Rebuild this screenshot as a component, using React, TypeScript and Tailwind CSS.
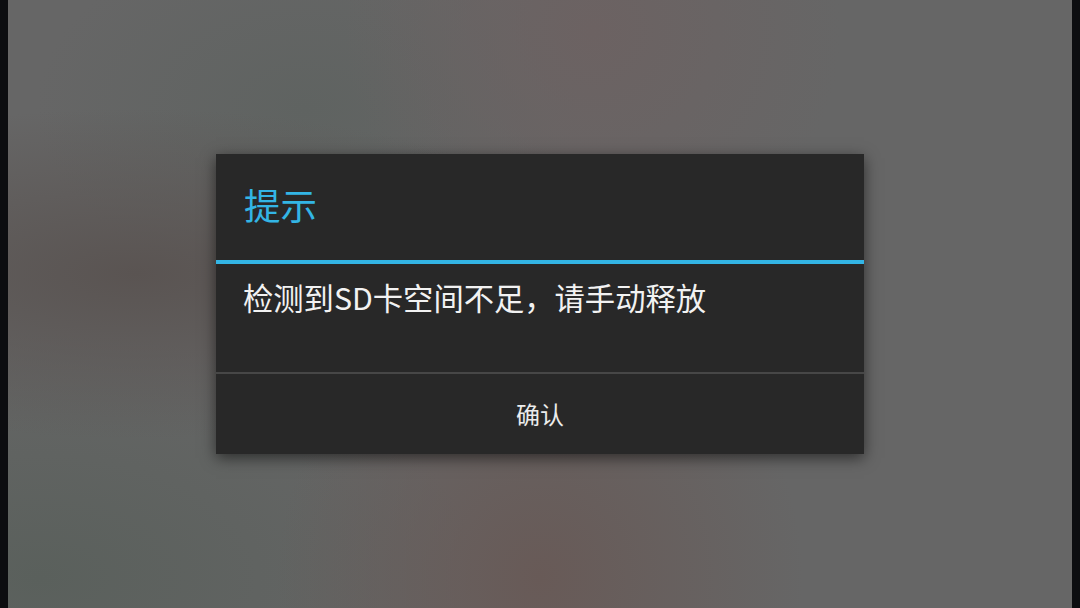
import React from "react";

const cjk = "font-['Noto_Sans_CJK_SC',_'Noto_Sans',_sans-serif]";

export default function App() {
  return (
    <div className={`flex w-[1080px] h-[608px] bg-[#0e0f12] ${cjk}`}>
      {/* letterbox bars on both sides */}
      <div className="w-2 shrink-0 bg-[#0c0d10]" />

      {/* blurred backdrop behind the dialog */}
      <div className="flex-1 flex items-center justify-center bg-[#666666] bg-[radial-gradient(ellipse_at_12%_45%,#5a5452_0%,transparent_35%),radial-gradient(ellipse_at_55%_5%,#6c6262_0%,transparent_30%),radial-gradient(ellipse_at_50%_95%,#685a57_0%,transparent_35%),radial-gradient(ellipse_at_3%_95%,#5a605c_0%,transparent_30%),radial-gradient(ellipse_at_28%_18%,#5f6361_0%,transparent_25%)]">
        <div className="w-[648px] bg-[#282828] shadow-[0_4px_14px_rgba(0,0,0,0.55)] flex flex-col">
          <div className="h-[106px] flex items-center pl-[28px] pb-[3px]">
            <h2 className="text-[36.5px] leading-none text-[#33b5e5]">提示</h2>
          </div>
          <div className="h-[4px] bg-[#33b5e5]" />

          <div className="h-[108px] pl-[27px] pt-[15px]">
            <p className="text-[30.3px] leading-[36px] text-[#f2f2f2]">
              检测到SD卡空间不足，请手动释放
            </p>
          </div>

          <div className="h-[2px] bg-[#474747]" />
          <button className="h-[80px] flex items-center justify-center text-[24px] text-[#ececec]">
            确认
          </button>
        </div>
      </div>

      <div className="w-2 shrink-0 bg-[#0c0d10]" />
    </div>
  );
}
